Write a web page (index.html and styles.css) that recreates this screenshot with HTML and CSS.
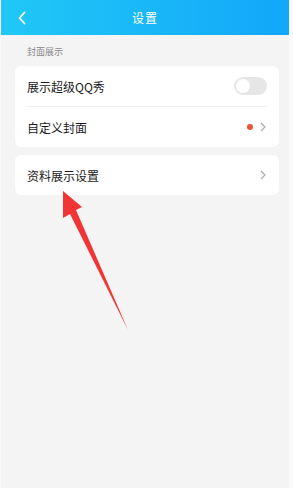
FILE: index.html
```html
<!DOCTYPE html>
<html lang="zh">
<head>
<meta charset="utf-8">
<link rel="stylesheet" href="styles.css">
</head>
<body>
<div class="screen">
  <header class="topbar">
    <svg class="back" width="10" height="14" viewBox="0 0 10 14"><path d="M7.5 1.5 L2.5 7 L7.5 12.5" fill="none" stroke="#fff" stroke-width="1.8" stroke-linecap="round" stroke-linejoin="round"/></svg>
    <span class="title">设置</span>
  </header>
  <main class="content">
    <div class="section-label">封面展示</div>
    <div class="card">
      <div class="row">
        <span class="label">展示超级QQ秀</span>
        <span class="toggle"><span class="knob"></span></span>
      </div>
      <div class="divider"></div>
      <div class="row">
        <span class="label">自定义封面</span>
        <span class="right"><span class="dot"></span><svg class="chev" width="6" height="10" viewBox="0 0 6 10"><path d="M1 1 L5 5 L1 9" fill="none" stroke="#aaa" stroke-width="1.1"/></svg></span>
      </div>
    </div>
    <div class="card">
      <div class="row">
        <span class="label">资料展示设置</span>
        <span class="right"><svg class="chev" width="6" height="10" viewBox="0 0 6 10"><path d="M1 1 L5 5 L1 9" fill="none" stroke="#aaa" stroke-width="1.1"/></svg></span>
      </div>
    </div>
  </main>
  <svg class="arrow" width="293" height="488" viewBox="0 0 293 488"><polygon points="63,191 82,207 76,210 128,330 70,214 63,218" fill="#f13535"/></svg>
</div>
</body>
</html>
```

FILE: styles.css
```css
html, body {
  margin: 0;
  padding: 0;
}
body {
  background: #f9f9f9;
  font-family: "Noto Sans CJK SC", "Noto Sans", sans-serif;
  width: 293px;
  height: 488px;
  overflow: hidden;
}
.screen {
  position: relative;
  width: 288px;
  height: 488px;
  margin-left: 1px;
  background: #f4f4f4;
}
.topbar {
  height: 35px;
  background: linear-gradient(90deg, #21c8f6 0%, #12a7fa 100%);
  display: flex;
  align-items: center;
  justify-content: center;
  position: relative;
}
.back {
  position: absolute;
  left: 16px;
  top: 11px;
}
.title {
  color: #fff;
  font-size: 12px;
  letter-spacing: 1px;
}
.content {
  padding: 10px 10px 0 14px;
  display: flex;
  flex-direction: column;
}
.section-label {
  font-size: 9px;
  color: #888;
  padding-left: 12px;
  height: 21px;
  line-height: 14px;
}
.card {
  background: #fff;
  border-radius: 6px;
  margin-bottom: 8px;
  padding: 0 12px;
}
.row {
  height: 40px;
  display: flex;
  align-items: center;
  justify-content: space-between;
}
.label {
  font-size: 12px;
  color: #1a1a1a;
}
.divider {
  height: 1px;
  background: #f0f0f0;
}
.toggle {
  width: 33px;
  height: 18px;
  border-radius: 9px;
  background: #e6e6e6;
  display: flex;
  align-items: center;
  padding-left: 2px;
  box-sizing: border-box;
}
.knob {
  width: 14px;
  height: 14px;
  border-radius: 50%;
  background: #fff;
}
.right {
  display: flex;
  align-items: center;
  gap: 7px;
}
.dot {
  width: 6px;
  height: 6px;
  border-radius: 50%;
  background: #ee5331;
}
.chev {
  display: block;
  margin-right: 1px;
}
.arrow {
  position: absolute;
  left: -1px;
  top: 0;
  pointer-events: none;
}
```
